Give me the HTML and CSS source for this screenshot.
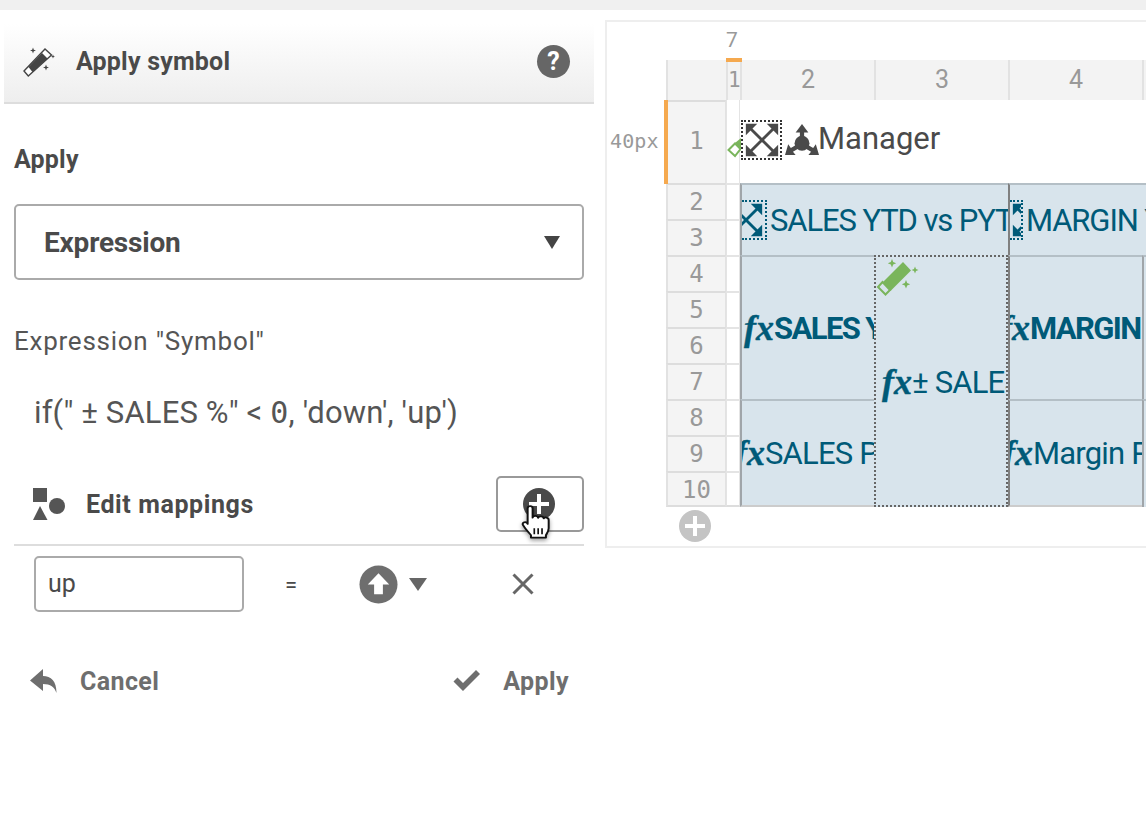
FILE: index.html
```html
<!DOCTYPE html>
<html lang="en">
<head>
  <meta charset="UTF-8">
  <title>Apply symbol</title>
  <link rel="stylesheet" href="styles.css">
</head>
<body>
  <div class="topbar"></div>
  <div class="main">
    <div class="panel">
      <div class="panel-head">
        <svg class="wand-icon" viewBox="0 0 32 32" width="32" height="32">
          <path d="M2 25L23 3l6.500 6L6.300 30z" fill="#fff" stroke="#444" stroke-width="1.400"/>
          <path d="M6.500 21L20 7l5.500 5.500L10.500 26z" fill="#444"/>
          <path d="M11 1.500l.8 2.200 2.200.8-2.200.8-.8 2.200-.8-2.200-2.200-.8 2.200-.8zM31 8.500l.6 1.400 1.400.6-1.400.6-.6 1.400-.6-1.400-1.400-.6 1.400-.6zM24 18.500l.8 2.200 2.200.8-2.200.8-.8 2.200-.8-2.200-2.200-.8 2.200-.8z" fill="#444"/>
        </svg>
        <span class="panel-title">Apply symbol</span>
        <span class="help">?</span>
      </div>
      <div class="panel-body">
        <div class="apply-label">Apply</div>
        <div class="select-box">
          <span>Expression</span>
          <span class="caret caret-big"></span>
        </div>
        <div class="expr-label">Expression "Symbol"</div>
        <div class="expr-text">if(" ± SALES %" &lt; <span class="mono">0</span>, 'down', 'up')</div>
        <div class="map-head">
          <svg viewBox="0 0 32 32" width="32" height="32">
            <rect x="0" y="0" width="14" height="14" fill="#555"/>
            <circle cx="24" cy="18" r="8" fill="#555"/>
            <path d="M7 18l7.500 14H0z" fill="#555"/>
          </svg>
          <span class="map-title">Edit mappings</span>
          <button class="add-btn">
            <span class="add-circle"></span>
            <svg class="hand" viewBox="0 0 28 36" width="31" height="35" preserveAspectRatio="none">
              <path d="M6 3.500c0-3 4.500-3 4.500 0V13c.5-2.500 4.500-2.500 5 .2.500-2 4.500-2 5 .6.500-1.600 4.500-1.300 4.500 1.500V24c0 3-1.500 5-2.500 7v2.500H9V31c-2-3-5-6-7-10-1.500-2.500 1.500-4.500 3.500-2.500l.5 1z" fill="#fff" stroke="#111" stroke-width="1.800" stroke-linejoin="round"/>
              <path d="M12 24v6M15.500 24v6M19 24v6" stroke="#111" stroke-width="1.500"/>
            </svg>
          </button>
        </div>
        <div class="map-row">
          <div class="map-input">up</div>
          <span class="equals">=</span>
          <span class="sym-pick">
            <svg viewBox="0 0 40 40" width="39" height="39">
              <circle cx="20" cy="20" r="19.500" fill="#6e6e6e"/>
              <path d="M20 8.500L31 20h-6.500v10h-9V20H9z" fill="#fff"/>
            </svg>
            <span class="caret"></span>
          </span>
          <svg class="close-x" viewBox="0 0 24 24" width="24" height="24">
            <path d="M2.500 2.500l19 19M21.500 2.500l-19 19" stroke="#666" stroke-width="3"/>
          </svg>
        </div>
        <div class="actions">
          <span class="action">
            <svg viewBox="0 0 30 30" width="30" height="30">
              <path d="M14 3v7c8 0 13.500 5 13.500 17-2-6-6-9-13.500-9v7L1 14.500z" fill="#6e6e6e"/>
            </svg>
            Cancel
          </span>
          <span class="action">
            <svg viewBox="0 0 30 24" width="30" height="24">
              <path d="M1.500 12.500l4-4 5.500 5.500L24 1l4 4-17 17z" fill="#6e6e6e"/>
            </svg>
            Apply
          </span>
        </div>
      </div>
    </div>

    <div class="editor">
      <div class="px-label">40px</div>
      <div class="col-tip">7</div>
      <div class="col-mark"></div>
      <div class="row-mark"></div>
      <div class="sheet">
        <div class="corner"></div>
        <div class="col-no col-1">1</div>
        <div class="col-no col-2">2</div>
        <div class="col-no col-3">3</div>
        <div class="col-no col-4">4</div>
        <div class="col-no col-5"></div>

        <div class="row-no r1">1</div>
        <div class="row-no r2">2</div>
        <div class="row-no r3">3</div>
        <div class="row-no r4">4</div>
        <div class="row-no r5">5</div>
        <div class="row-no r6">6</div>
        <div class="row-no r7">7</div>
        <div class="row-no r8">8</div>
        <div class="row-no r9">9</div>
        <div class="row-no r10">10</div>

        <div class="gutter g1"></div>
        <div class="gutter g2"></div>
        <div class="gutter g3"></div>
        <div class="gutter g4"></div>
        <div class="gutter g5"></div>
        <div class="gutter g6"></div>
        <div class="gutter g7"></div>
        <div class="gutter g8"></div>
        <div class="gutter g9"></div>
        <div class="gutter g10"></div>

        <div class="title-cell">
          <span class="dotted-box dark">
            <svg viewBox="0 0 40 40" width="38" height="38">
              <path d="M6 6l28 28M34 6L6 34" stroke="#4a4a4a" stroke-width="3"/>
              <path d="M3 3h12L3 15zM37 3H25l12 12zM3 37h12L3 25zM37 37H25l12-12z" fill="#4a4a4a"/>
            </svg>
          </span>
          <svg class="tri-icon" viewBox="0 0 32 32" width="34" height="34">
            <circle cx="16" cy="19" r="7" fill="#4a4a4a"/>
            <path d="M16 1l6 8h-4v6h-4V9h-4zM0 30l3-10 2.500 3.500 6-3.500 2 3.500-6 3.500L10 30zM32 30l-3-10-2.500 3.500-6-3.500-2 3.500 6 3.500L22 30z" fill="#4a4a4a"/>
          </svg>
          <span class="title-text">Manager</span>
        </div>

        <div class="dash head-a">
          <span class="dotted-box blue small-a">
            <svg viewBox="0 0 40 40" width="38" height="38">
              <path d="M6 6l28 28M34 6L6 34" stroke="#005a78" stroke-width="3"/>
              <path d="M3 3h12L3 15zM37 3H25l12 12zM3 37h12L3 25zM37 37H25l12-12z" fill="#005a78"/>
            </svg>
          </span>
          <span>SALES YTD vs PYT</span>
        </div>
        <div class="dash head-b">
          <span class="dotted-box blue small-b">
            <svg viewBox="0 0 40 40" width="38" height="38">
              <path d="M6 6l28 28M34 6L6 34" stroke="#005a78" stroke-width="3"/>
              <path d="M3 3h12L3 15zM37 3H25l12 12zM3 37h12L3 25zM37 37H25l12-12z" fill="#005a78"/>
            </svg>
          </span>
          <span>MARGIN YTD vs PYT</span>
        </div>

        <div class="dash kpi a1"><i class="fx">fx</i><b>SALES YTD</b></div>
        <div class="dash kpi a2 selected"><i class="fx">fx</i><span>± SALES %</span></div>
        <div class="dash kpi a3"><i class="fx">fx</i><b>MARGIN YTD</b></div>
        <div class="dash kpi a4"></div>
        <div class="dash kpi b1"><i class="fx">fx</i><span>SALES PYTD</span></div>
        <div class="dash kpi b3"><i class="fx">fx</i><span>Margin PYTD</span></div>
        <div class="dash kpi b4"></div>
      </div>
      <svg class="green-wand w-small" viewBox="0 0 14 21" width="14" height="21">
        <path d="M8 6l6-5v11z" fill="#7ab55c"/>
        <path d="M1.500 13L8 6.500 13.500 12 8 19z" fill="#fff" stroke="#7ab55c" stroke-width="2"/>
      </svg>
      <svg class="green-wand w-big" viewBox="0 0 40 40" width="40" height="40">
        <path d="M26 4l8 8.500L13.500 33 5 25z" fill="#7ab55c"/>
        <path d="M5.500 24l7.500 8-4.500 4.500L1 29z" fill="#d8e4ec" stroke="#7ab55c" stroke-width="2"/>
        <path d="M15 1l1.200 3 3 1.200-3 1.200-1.200 3-1.200-3-3-1.200 3-1.200zM38 8.500l1 2.500 2.500 1-2.500 1-1 2.500-1-2.500-2.500-1 2.500-1zM29 22l1.200 3 3 1.200-3 1.200-1.200 3-1.200-3-3-1.200 3-1.200z" fill="#7ab55c"/>
      </svg>
      <span class="add-row"></span>
    </div>
  </div>
</body>
</html>
```

FILE: styles.css
```css
body {
  margin: 0;
  background: #fff;
  font-family: "Roboto", "Liberation Sans", sans-serif;
  color: #4a4a4a;
  overflow: hidden;
}
.topbar {
  height: 10px;
  background: #f0f0f0;
}
.main {
  display: flex;
  align-items: flex-start;
  height: 830px;
}

/* left panel */
.panel {
  width: 590px;
  margin: 14px 0 0 4px;
  flex: none;
}
.panel-head {
  display: flex;
  align-items: center;
  box-sizing: content-box;
  height: 75px;
  padding: 0 24px 3px 18px;
  background: linear-gradient(#fff, #eee);
  border-bottom: 2px solid #ddd;
}
.wand-icon {
  margin-right: 22px;
  overflow: visible;
}
.panel-title {
  flex: 1;
  font-size: 25px;
  font-weight: 700;
  letter-spacing: 0.2px;
}
.help {
  width: 33px;
  height: 33px;
  border-radius: 50%;
  background: #666;
  color: #fff;
  font-size: 25px;
  font-weight: 700;
  line-height: 33px;
  text-align: center;
}
.panel-body {
  padding: 0 10px;
}
.apply-label {
  margin-top: 41px;
  font-size: 25px;
  line-height: 30px;
  font-weight: 700;
  letter-spacing: 0.2px;
}
.select-box {
  display: flex;
  align-items: center;
  justify-content: space-between;
  height: 72px;
  margin-top: 29px;
  padding: 0 22px 0 28px;
  border: 2px solid #aaa;
  border-radius: 5px;
  font-size: 28px;
  font-weight: 700;
  letter-spacing: -0.2px;
}
.caret {
  display: inline-block;
  border-left: 9px solid transparent;
  border-right: 9px solid transparent;
  border-top: 13px solid #666;
}
.caret-big {
  border-left-width: 8px;
  border-right-width: 8px;
  border-top-color: #444;
}
.expr-label {
  margin-top: 46px;
  font-size: 26px;
  line-height: 30px;
  letter-spacing: 0.75px;
  color: #555;
}
.expr-text {
  margin: 38px 0 0 20px;
  font-size: 31px;
  line-height: 38px;
  letter-spacing: 0.15px;
  white-space: nowrap;
  color: #555;
}
.mono {
  font-family: "DejaVu Sans Mono", monospace;
  font-size: 30px;
}
.map-head {
  display: flex;
  align-items: center;
  height: 56px;
  margin-top: 44px;
  padding-left: 19px;
  padding-bottom: 12px;
  border-bottom: 2px solid #ddd;
}
.map-head svg:first-child {
  flex: none;
}
.map-title {
  flex: 1;
  margin-left: 21px;
  font-size: 25px;
  font-weight: 700;
  letter-spacing: 0.6px;
}
.add-btn {
  position: relative;
  width: 88px;
  height: 56px;
  padding: 0;
  background: #fff;
  border: 2px solid #999;
  border-radius: 5px;
}
.add-circle {
  position: absolute;
  left: 25px;
  top: 10px;
  width: 32px;
  height: 32px;
  border-radius: 50%;
  background: #4a4a4a;
}
.add-circle::before,
.add-circle::after {
  content: "";
  position: absolute;
  background: #fff;
}
.add-circle::before {
  left: 6px;
  top: 14px;
  width: 20px;
  height: 4px;
}
.add-circle::after {
  left: 14px;
  top: 6px;
  width: 4px;
  height: 20px;
}
.hand {
  position: absolute;
  left: 23px;
  top: 27px;
  filter: drop-shadow(0 2px 2px rgba(0, 0, 0, 0.4));
}
.map-row {
  display: flex;
  align-items: center;
  height: 56px;
  margin-top: 10px;
  padding-left: 20px;
}
.map-input {
  box-sizing: border-box;
  width: 210px;
  height: 56px;
  padding: 0 12px;
  border: 2px solid #aaa;
  border-radius: 5px;
  font-size: 25px;
  line-height: 52px;
}
.equals {
  margin-left: 41px;
  width: 12px;
  font-size: 22px;
}
.sym-pick {
  display: flex;
  align-items: center;
  gap: 11px;
  margin-left: 62px;
}
.close-x {
  margin-left: 84px;
}
.actions {
  display: flex;
  justify-content: space-between;
  margin-top: 49px;
  padding: 0 15px;
}
.action {
  display: flex;
  align-items: center;
  gap: 21px;
  height: 40px;
  font-size: 25px;
  font-weight: 700;
  letter-spacing: 0.4px;
  color: #6e6e6e;
}

/* layout editor */
.editor {
  position: relative;
  box-sizing: border-box;
  flex: 1;
  min-width: 0;
  height: 528px;
  margin: 10px 0 0 11px;
  border: 2px solid #eee;
  border-right: none;
  overflow: hidden;
}
.sheet {
  display: grid;
  grid-template-columns: 60px 14px repeat(4, 134px);
  grid-template-rows: 40px 83px repeat(9, 36px);
  margin: 38px 0 0 59px;
  width: 734px;
}
.corner,
.col-no {
  grid-row: 1;
  background: #f3f3f3;
  border-left: 2px solid #e2e2e2;
  color: #999;
  font-size: 25px;
  line-height: 40px;
  text-align: center;
  box-sizing: border-box;
}
.corner { grid-column: 1; }
.col-1 {
  grid-column: 2;
  font-family: "DejaVu Sans Mono", monospace;
  font-size: 21px;
}
.col-2 { grid-column: 3; }
.col-3 { grid-column: 4; }
.col-4 { grid-column: 5; }
.col-5 { grid-column: 6; }

.row-no {
  grid-column: 1;
  box-sizing: border-box;
  background: #f4f4f4;
  border-left: 2px solid #e2e2e2;
  border-right: 1px solid #e2e2e2;
  border-top: 2px solid #ddd;
  color: #999;
  font-family: "DejaVu Sans Mono", monospace;
  font-size: 24px;
  line-height: 34px;
  text-align: center;
}
.r1 { grid-row: 2; line-height: 78px; }
.r2 { grid-row: 3; }
.r3 { grid-row: 4; }
.r4 { grid-row: 5; }
.r5 { grid-row: 6; }
.r6 { grid-row: 7; }
.r7 { grid-row: 8; }
.r8 { grid-row: 9; }
.r9 { grid-row: 10; }
.r10 { grid-row: 11; border-bottom: 2px solid #ddd; }

.gutter {
  grid-column: 2;
  box-sizing: border-box;
  border-top: 2px solid #e4e4e4;
  border-right: 1px solid #e4e4e4;
  border-left: 1px solid #e4e4e4;
  background: #fff;
}
.g1 { grid-row: 2; border-top: none; }
.g2 { grid-row: 3; }
.g3 { grid-row: 4; }
.g4 { grid-row: 5; }
.g5 { grid-row: 6; }
.g6 { grid-row: 7; }
.g7 { grid-row: 8; }
.g8 { grid-row: 9; }
.g9 { grid-row: 10; }
.g10 { grid-row: 11; border-bottom: 2px solid #ddd; }

.title-cell {
  grid-column: 3 / 7;
  grid-row: 2;
  display: flex;
  align-items: center;
  gap: 3px;
  padding: 0 0 3px 1px;
  font-size: 31px;
  white-space: nowrap;
}
.title-text {
  margin: 0 0 3px -4px;
}
.dotted-box {
  flex: none;
  box-sizing: border-box;
  display: flex;
  align-items: center;
  justify-content: center;
  overflow: hidden;
  height: 40px;
  border: 2px dotted #333;
}
.dotted-box svg {
  flex: none;
}
.dark {
  width: 41px;
}
.blue {
  border-color: #005a78;
}
.small-a {
  width: 25px;
  justify-content: flex-end;
  border-left: none;
}
.small-b {
  width: 13px;
  justify-content: flex-start;
  border-left: none;
}
.dash {
  display: flex;
  align-items: center;
  box-sizing: border-box;
  overflow: hidden;
  background: #d8e4ec;
  color: #005a78;
  font-size: 31px;
  white-space: nowrap;
  border-top: 2px solid #b4bfc6;
  border-left: 2px solid #a0a5a9;
}
.head-a,
.head-b {
  grid-row: 3 / 5;
  gap: 3px;
  letter-spacing: -1.1px;
}
.head-a {
  grid-column: 3 / 5;
}
.head-b {
  grid-column: 5 / 7;
  border-left-color: #808080;
}
.kpi b {
  font-weight: 700;
  letter-spacing: -1.6px;
}
.kpi span {
  letter-spacing: -0.8px;
}
.fx {
  flex: none;
  font-family: "Liberation Serif", serif;
  font-weight: 700;
  font-size: 36px;
  -webkit-text-stroke: 0.4px #005a78;
}
.a1 { grid-column: 3; grid-row: 5 / 9; }
.a2 { grid-column: 4; grid-row: 5 / 12; border: 2px dotted #666; padding-left: 6px; padding-top: 2px; }
.a3 { grid-column: 5; grid-row: 5 / 9; border-left-color: #808080; }
.a4 { grid-column: 6; grid-row: 5 / 9; }
.b1 { grid-column: 3; grid-row: 9 / 12; border-bottom: 2px solid #ccc; }
.b3 { grid-column: 5; grid-row: 9 / 12; border-left-color: #808080; border-bottom: 2px solid #ccc; }
.b4 { grid-column: 6; grid-row: 9 / 12; }
.a1 .fx { margin-left: 2px; }
.b1 .fx,
.b3 .fx { margin-left: -7px; }
.a3 .fx { margin-left: -10px; }

.px-label {
  position: absolute;
  left: 3px;
  top: 107px;
  color: #999;
  font-family: "DejaVu Sans Mono", monospace;
  font-size: 20px;
  letter-spacing: 0.1px;
}
.col-tip {
  position: absolute;
  left: 119px;
  top: 6px;
  color: #999;
  font-size: 21px;
}
.col-mark {
  position: absolute;
  left: 119px;
  top: 36px;
  width: 16px;
  height: 4px;
  background: #f5a94f;
}
.row-mark {
  position: absolute;
  left: 57px;
  top: 78px;
  width: 4px;
  height: 84px;
  background: #f5a94f;
}
.green-wand {
  position: absolute;
}
.w-small {
  left: 120px;
  top: 115px;
}
.w-big {
  left: 270px;
  top: 236px;
  overflow: visible;
}
.add-row {
  position: absolute;
  left: 72px;
  top: 488px;
  width: 32px;
  height: 32px;
  border-radius: 50%;
  background: #c4c4c4;
}
.add-row::before,
.add-row::after {
  content: "";
  position: absolute;
  background: #fff;
}
.add-row::before {
  left: 6px;
  top: 14px;
  width: 20px;
  height: 4px;
}
.add-row::after {
  left: 14px;
  top: 6px;
  width: 4px;
  height: 20px;
}
```
